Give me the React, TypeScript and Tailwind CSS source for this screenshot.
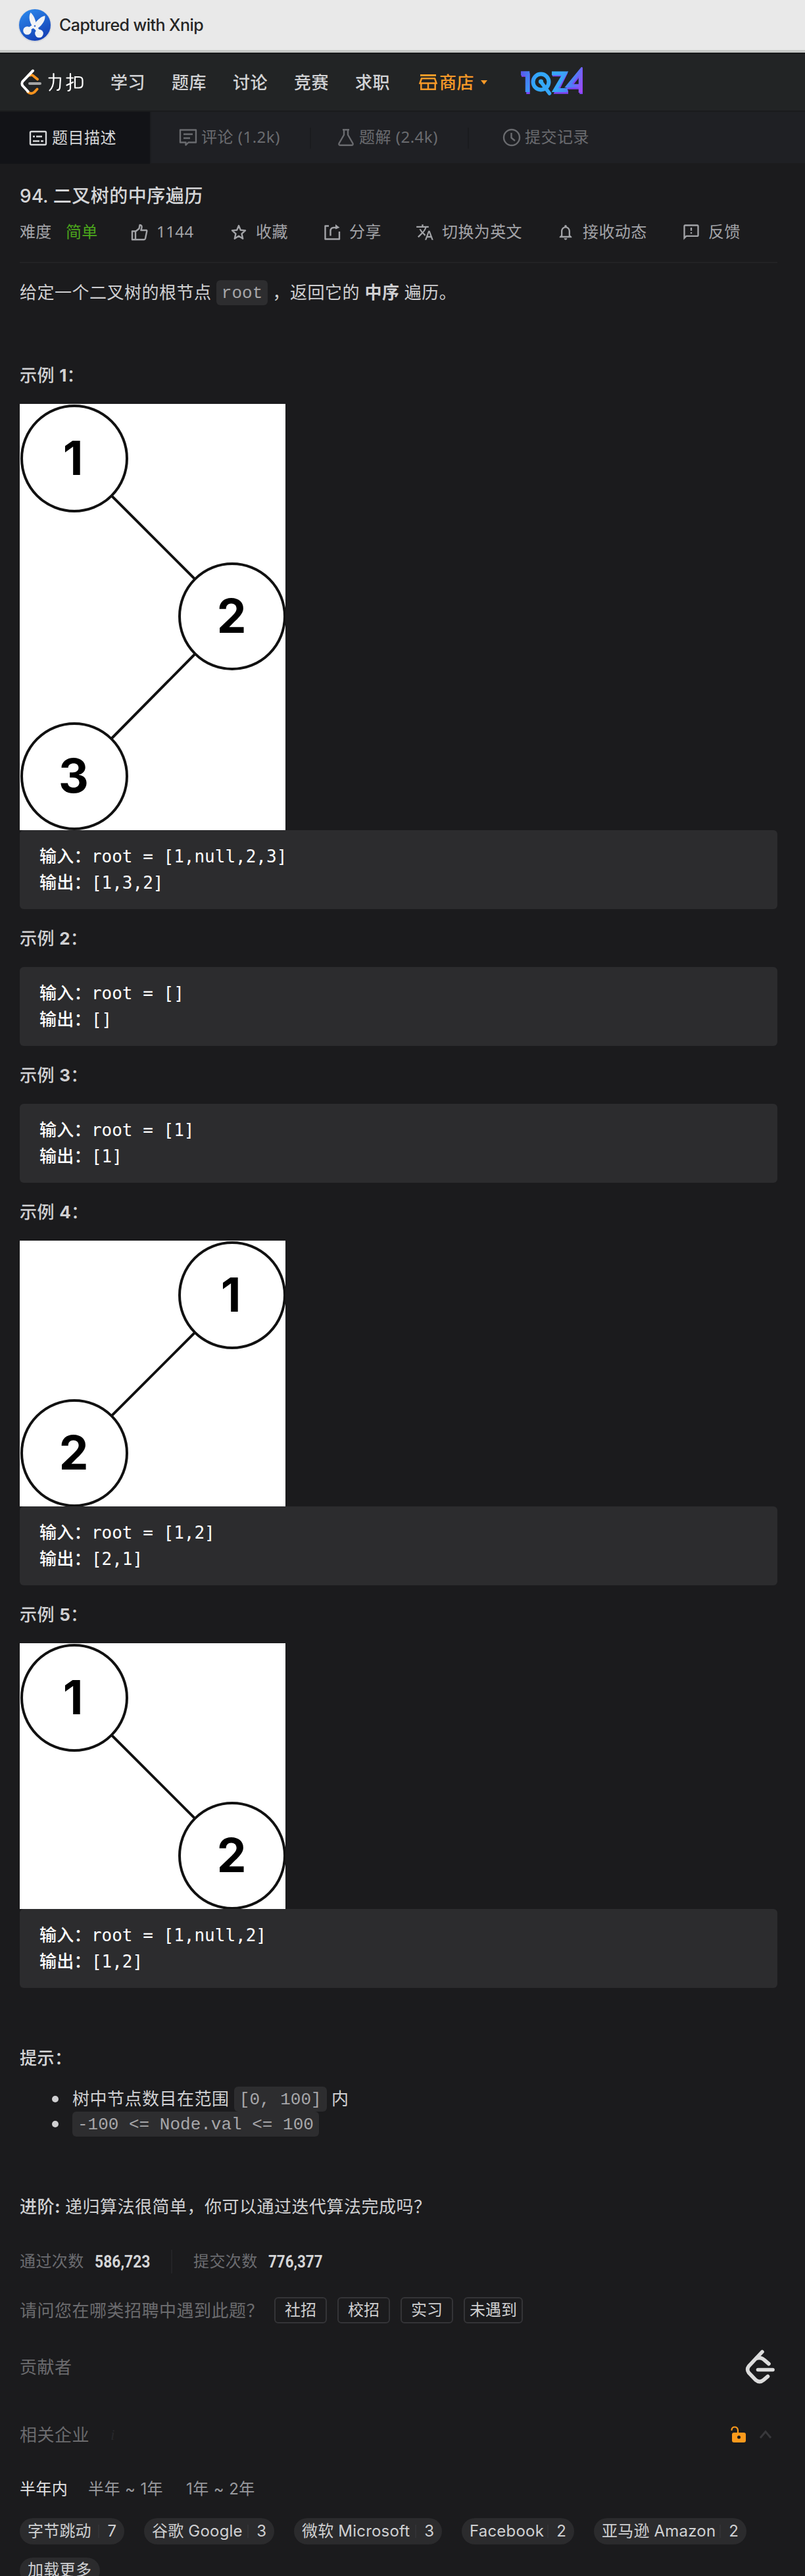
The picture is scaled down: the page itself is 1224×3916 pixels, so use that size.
import React from "react";

const SANS = "font-['Inter','Noto_Sans_CJK_SC',sans-serif]";

/* CJK runs carry a slight tracking; the base text size is 26px, the small one 24px. */
function Zh({ children, className = "" }: { children: React.ReactNode; className?: string }) {
  return <span className={`tracking-[0.5px] ${className}`}>{children}</span>;
}

function Chip({ children }: { children: string }) {
  return (
    <code className="inline-block h-[38px] rounded-[6px] bg-[#2d2d2f] px-2 align-top font-['Liberation_Mono',monospace] text-[26px] leading-[40px] whitespace-pre text-[#a6a6a9]">
      {children}
    </code>
  );
}

function XnipIcon() {
  return (
    <svg width="54" height="54" viewBox="0 0 54 54" className="ml-[26px] mt-[11px] shrink-0">
      <defs>
        <linearGradient id="xnip" x1="0" y1="0" x2="0.5" y2="1">
          <stop offset="0" stopColor="#2c8df0" />
          <stop offset="1" stopColor="#1644b8" />
        </linearGradient>
      </defs>
      <circle cx="27" cy="27.8" r="25.4" fill="#cfd2d8" opacity="0.7" />
      <circle cx="27" cy="27" r="24" fill="url(#xnip)" />
      <path d="M20.5 8 C16.5 15 19.5 23 23.5 30 L29 26 C28 19 25.5 12.5 20.5 8Z" fill="#f1f3f6" />
      <path d="M42.5 13 C37 14 32 18 27.5 24 L23 31 L28.5 34.5 C36 29 43 22 42.5 13Z" fill="#f1f3f6" />
      <circle cx="15.5" cy="35.5" r="6.3" fill="#f1f3f6" />
      <circle cx="33.5" cy="40" r="6.3" fill="#f1f3f6" />
      <path d="M19 32.5 L26 28 L32 36" stroke="#f1f3f6" strokeWidth="5" fill="none" />
      <circle cx="27" cy="28.5" r="1.2" fill="#2a62cc" />
    </svg>
  );
}

function LeetLogo() {
  return (
    <svg width="33" height="40" viewBox="0 0 33 40" fill="none" strokeLinecap="round" strokeLinejoin="round">
      <path d="M14.5 9.5 C17 8.6 19 9.3 20.5 11 L26 15.5" stroke="#f7931e" strokeWidth="4" />
      <path d="M11 34.5 C14 37.5 18 37.8 21 35.3 L25.5 30.5" stroke="#f7931e" strokeWidth="4" />
      <path d="M19 2.5 L3.6 18.6 C2 20.5 2 23.5 3.6 25.5 L11.5 34" stroke="#fff" strokeWidth="4" />
      <path d="M14 22 H30" stroke="#a5a5a5" strokeWidth="4" />
    </svg>
  );
}

function Wordmark() {
  return (
    <svg width="54" height="30" viewBox="0 0 54 30" className="ml-[9px]" fill="none" stroke="#fff" strokeWidth="2.2" strokeLinecap="round" strokeLinejoin="round">
      <path d="M1.5 8.5 H19 L18 23 Q17.5 27 14 27" />
      <path d="M8.5 2 V11 Q8.5 22 2.5 27.5" />
      <path d="M28.5 8.5 H38 M34 2 V24 Q34 28 30.5 28 M28.5 19.5 L38 15" />
      <path d="M41 6.8 V23.5 M41 7 H47 Q52.5 7 52.5 12 V18 Q52.5 23.5 47 23.5 H41" />
    </svg>
  );
}

function StoreIcon() {
  return (
    <svg width="28" height="24" viewBox="0 0 28 24" fill="none" stroke="#f89a28" strokeWidth="2.5">
      <path d="M2 1.5 H26" strokeWidth="3" />
      <path d="M4 6.3 H24 L26.5 13.5 H1.5 Z" />
      <path d="M3.3 14 V22.7 H24.7 V14 M14 14 V22" />
    </svg>
  );
}

function EventLogo() {
  return (
    <svg width="95" height="46" viewBox="0 0 95 46" fill="none" className="ml-[49px]">
      <defs>
        <linearGradient id="evt" gradientUnits="userSpaceOnUse" x1="0" y1="8" x2="96" y2="40">
          <stop offset="0" stopColor="#5b52e8" />
          <stop offset="0.25" stopColor="#31a8fb" />
          <stop offset="0.6" stopColor="#39a6f8" />
          <stop offset="0.8" stopColor="#4f7cf6" />
          <stop offset="1" stopColor="#b43cf8" />
        </linearGradient>
      </defs>
      <g transform="translate(1 2)" stroke="#7d45f2" strokeWidth="5.5">
        <path d="M1 10 H11 V39" />
        <path d="M48 9.5 H67 L54 36 H72" />
        <path d="M92 39 V5 L73 29 H94" />
      </g>
      <g stroke="url(#evt)" strokeWidth="6">
        <path d="M1 9.5 H11 V38" strokeWidth="6.5" />
        <circle cx="31.5" cy="22.5" r="12" />
        <path d="M31.5 22.5 L44.5 40" strokeWidth="5.5" strokeLinecap="round" />
        <path d="M48 9.5 H68 L53 35 H72" />
        <path d="M91.5 39 V6 L73 28.5 H94" strokeWidth="5.5" />
      </g>
      <circle cx="31.5" cy="22" r="3.6" fill="#33adfb" />
    </svg>
  );
}

const icon = { fill: "none", stroke: "currentColor", strokeWidth: 2.4, strokeLinejoin: "round" as const };

function DescIcon() {
  return (
    <svg width="28" height="24" viewBox="0 0 28 24" {...icon}>
      <rect x="2" y="2" width="24" height="20" rx="1.5" />
      <path d="M6 9.5 H9 M11 9.5 H20 M6 16.5 H16 M18 16.5 H22" />
    </svg>
  );
}
function CommentIcon() {
  return (
    <svg width="28" height="28" viewBox="0 0 28 28" {...icon}>
      <path d="M2 2.5 H26 V21.5 H14.5 L10.5 25.5 V21.5 H2 Z" />
      <path d="M7 9 H21 M7 15 H17" />
    </svg>
  );
}
function FlaskIcon() {
  return (
    <svg width="26" height="28" viewBox="0 0 26 28" {...icon}>
      <path d="M8 2.2 H18 M10 2.5 V10 L2.5 23 Q1.8 25.8 4.5 25.8 H21.5 Q24.2 25.8 23.5 23 L16 10 V2.5" />
    </svg>
  );
}
function ClockIcon() {
  return (
    <svg width="28" height="28" viewBox="0 0 28 28" {...icon}>
      <circle cx="14" cy="14" r="12" />
      <path d="M13.5 7 V14.5 L19 19" />
    </svg>
  );
}
function LikeIcon() {
  return (
    <svg width="26" height="26" viewBox="0 0 26 26" {...icon}>
      <path d="M2 11.5 H7 V24.2 H2 Z M7 12 L12.5 7.5 L13.6 2 Q17.2 2 16.4 6.4 L15.4 10 H23.5 Q24.6 10.4 24.2 11.8 L22 22.6 Q21.5 24.2 20 24.2 H7" />
    </svg>
  );
}
function StarIcon() {
  return (
    <svg width="24" height="24" viewBox="0 0 24 24" {...icon}>
      <path d="M12 2 L14.8 8.8 L22 9.4 L16.5 14.3 L18.2 21.8 L12 17.8 L5.8 21.8 L7.5 14.3 L2 9.4 L9.2 8.8 Z" />
    </svg>
  );
}
function ShareIcon() {
  return (
    <svg width="26" height="26" viewBox="0 0 26 26" {...icon}>
      <path d="M8 3.5 H2.5 V23.5 H24 V12 M10.5 18.5 V11.5 Q10.5 6 15.5 6 H21" />
      <path d="M18 1 L24.5 6 L18 8.5 Z" fill="currentColor" stroke="none" />
    </svg>
  );
}
function TranslateIcon() {
  return (
    <svg width="28" height="28" viewBox="0 0 24 24" fill="currentColor">
      <path d="m12.87 15.07-2.54-2.51.03-.03c1.74-1.94 2.98-4.17 3.71-6.53H17V4h-7V2H8v2H1v1.99h11.17C11.5 7.92 10.44 9.75 9 11.35 8.07 10.32 7.3 9.19 6.69 8h-2c.73 1.63 1.73 3.17 2.98 4.56l-5.09 5.02L4 19l5-5 3.11 3.11.76-2.04zM18.5 10h-2L12 22h2l1.12-3h4.75L21 22h2l-4.5-12zm-2.62 7 1.62-4.33L19.12 17h-3.24z" />
    </svg>
  );
}
function BellIcon() {
  return (
    <svg width="28" height="28" viewBox="0 0 24 24" fill="currentColor">
      <path d="M12 22c1.1 0 2-.9 2-2h-4c0 1.1.9 2 2 2zm6-6v-5c0-3.07-1.63-5.64-4.5-6.32V4c0-.83-.67-1.5-1.5-1.5s-1.5.67-1.5 1.5v.68C7.64 5.36 6 7.92 6 11v5l-2 2v1h16v-1l-2-2zm-2 1H8v-6c0-2.48 1.51-4.5 4-4.5s4 2.02 4 4.5v6z" />
    </svg>
  );
}
function FeedbackIcon() {
  return (
    <svg width="28" height="28" viewBox="0 0 24 24" fill="currentColor">
      <path d="M20 2H4c-1.1 0-1.99.9-1.99 2L2 22l4-4h14c1.1 0 2-.9 2-2V4c0-1.1-.9-2-2-2zm0 14H5.17L4 17.17V4h16v12zm-9-4h2v2h-2v-2zm0-6h2v4h-2V6z" />
    </svg>
  );
}

type TreeNode = { x: number; y: number; v: string };

/* Binary tree figure; node centres sit 83px from the left edge of the white sheet. */
function Tree({ height, nodes, edges }: { height: number; nodes: TreeNode[]; edges: [number, number][] }) {
  return (
    <svg width="404" height={height} viewBox={`0 0 404 ${height}`} className="block bg-white">
      {edges.map(([a, b]) => (
        <line key={`${a}${b}`} x1={nodes[a].x} y1={nodes[a].y} x2={nodes[b].x} y2={nodes[b].y} stroke="#111" strokeWidth="4" />
      ))}
      {nodes.map((n) => (
        <g key={n.v}>
          <circle cx={n.x} cy={n.y} r="80" fill="#fff" stroke="#111" strokeWidth="4" />
          <text x={n.v === "1" ? n.x - 2 : n.x - 1} y={n.y + 25} textAnchor="middle" className="font-['Inter',sans-serif] text-[71px] font-bold" fill="#000">
            {n.v}
          </text>
        </g>
      ))}
    </svg>
  );
}

function Label({ n }: { n: number }) {
  return (
    <p className="my-6 h-10 text-[26px] leading-[42px] text-[#d0d0d2]">
      <Zh className="font-medium">示例</Zh> <b className="font-bold">{n}</b>
      <span className="font-medium">：</span>
    </p>
  );
}

function Sample({ input, output }: { input: string; output: string }) {
  return (
    <pre className="h-[120px] rounded-[6px] bg-[#2c2c2e] px-[30px] py-5 font-['DejaVu_Sans_Mono','Noto_Sans_CJK_SC',monospace] text-[26px] leading-10 text-white">
      <span className="font-medium tracking-[0.3px]">输入：</span>
      {input}
      {"\n"}
      <span className="font-medium tracking-[0.3px]">输出：</span>
      {output}
    </pre>
  );
}

function Action({ icon: glyph, text, className }: { icon: React.ReactNode; text: string; className: string }) {
  return (
    <div className={`flex h-10 shrink-0 items-center ${className}`}>
      <span className="flex w-7 shrink-0 justify-center">{glyph}</span>
      <span className="ml-3 pb-[3px] font-['Noto_Sans','Noto_Sans_CJK_SC',sans-serif] whitespace-nowrap tracking-[0.4px]">{text}</span>
    </div>
  );
}

const companies: [string, string, string][] = [
  ["字节跳动", "7", "w-[159px]"],
  ["谷歌 Google", "3", "w-[198px]"],
  ["微软 Microsoft", "3", "w-[225px]"],
  ["Facebook", "2", "w-[171px]"],
  ["亚马逊 Amazon", "2", "w-[232px]"],
];

export default function App() {
  return (
    <div className={`h-[3916px] w-[1224px] overflow-hidden bg-[#1b1b1d] ${SANS}`}>
      <div className="flex h-20 border-b-4 border-[#c6c8c6] bg-[#e9e9e9]">
        <XnipIcon />
        <span className="ml-[10px] text-[25px] leading-[77px] font-medium tracking-[-0.55px] text-[#262626]">Captured with Xnip</span>
      </div>

      <header className="flex h-[90px] items-center border-t-2 border-b-2 border-t-[#17191a] border-b-[#1a1b1d] bg-[#222425] pl-[31px] text-[26px] font-medium text-[#d2d3d5]">
        <LeetLogo />
        <Wordmark />
        <nav className="ml-[41px] flex gap-10">
          {["学习", "题库", "讨论", "竞赛", "求职"].map((t) => (
            <span key={t} className="w-[53px] whitespace-nowrap tracking-[0.5px]">{t}</span>
          ))}
        </nav>
        <div className="ml-[44px] flex items-center text-[#f89a28]">
          <StoreIcon />
          <span className="ml-[3px] w-[53px] whitespace-nowrap tracking-[0.5px]">商店</span>
          <svg width="12" height="7" viewBox="0 0 12 7" className="ml-[9px]">
            <path d="M1 0 H11 L6 6.5 Z" fill="#f89a28" />
          </svg>
        </div>
        <EventLogo />
      </header>

      <div className="flex h-[78px] bg-[#1f2024] font-['Noto_Sans','Noto_Sans_CJK_SC',sans-serif] text-[24px] tracking-[0.5px] text-[#6a6b6f]">
        <div className="flex h-[79px] w-[230px] items-center border-r-2 border-[#1b1c1f] bg-[#121317] pl-11 text-[#d6d7d9]">
          <DescIcon />
          <span className="ml-[7px] pb-0.5">题目描述</span>
        </div>
        <div className="flex h-full w-[241px] items-center pl-[42px]">
          <CommentIcon />
          <span className="ml-[6px] pb-0.5 whitespace-nowrap">评论 (1.2k)</span>
        </div>
        <div className="mt-6 h-8 w-0.5 bg-[#1a1b1e]" />
        <div className="flex h-full w-[238px] items-center pl-10">
          <FlaskIcon />
          <span className="ml-[7px] pb-0.5 whitespace-nowrap">题解 (2.4k)</span>
        </div>
        <div className="mt-6 h-8 w-0.5 bg-[#1a1b1e]" />
        <div className="flex h-full items-center pl-[51px]">
          <ClockIcon />
          <span className="ml-[6px] pb-0.5">提交记录</span>
        </div>
      </div>

      <main className="pr-[42px] pl-[30px]">
        <h1 className="mt-[30px] h-10 text-[28px] leading-10 font-medium whitespace-nowrap text-[#d4d5d7]">
          94. <Zh>二叉树的中序遍历</Zh>
        </h1>

        <div className="mt-[15px] flex h-[67px] border-b-2 border-[#222224] text-[24px] leading-10 text-[#a3a4a8]">
          <span className="w-[70px] shrink-0 tracking-[0.3px]">难度</span>
          <span className="w-[98px] shrink-0 tracking-[0.3px] text-[#4ba61c]">简单</span>
          <Action className="w-[151px]" icon={<LikeIcon />} text="1144" />
          <Action className="w-[142px]" icon={<StarIcon />} text="收藏" />
          <Action className="w-[141px]" icon={<ShareIcon />} text="分享" />
          <Action className="w-[214px]" icon={<TranslateIcon />} text="切换为英文" />
          <Action className="w-[191px]" icon={<BellIcon />} text="接收动态" />
          <Action className="w-[100px]" icon={<FeedbackIcon />} text="反馈" />
        </div>

        <div className="mt-[26px] h-[38px] text-[26px] leading-[38px] whitespace-nowrap text-[#d0d0d2]">
          <Zh>给定一个二叉树的根节点</Zh> <Chip>root</Chip> <Zh>，返回它的</Zh> <Zh className="font-bold">中序</Zh> <Zh>遍历。</Zh>
        </div>

        <div className="pt-[62px]">
          <Label n={1} />
          <Tree
            height={648}
            nodes={[{ x: 83, y: 83, v: "1" }, { x: 323, y: 323, v: "2" }, { x: 83, y: 566, v: "3" }]}
            edges={[[0, 1], [1, 2]]}
          />
          <Sample input="root = [1,null,2,3]" output="[1,3,2]" />
          <Label n={2} />
          <Sample input="root = []" output="[]" />
          <Label n={3} />
          <Sample input="root = [1]" output="[1]" />
          <Label n={4} />
          <Tree height={404} nodes={[{ x: 323, y: 83, v: "1" }, { x: 83, y: 323, v: "2" }]} edges={[[0, 1]]} />
          <Sample input="root = [1,2]" output="[2,1]" />
          <Label n={5} />
          <Tree height={404} nodes={[{ x: 83, y: 83, v: "1" }, { x: 323, y: 323, v: "2" }]} edges={[[0, 1]]} />
          <Sample input="root = [1,null,2]" output="[1,2]" />
        </div>

        <p className="mt-[87px] h-10 text-[26px] leading-10 font-medium text-[#d4d5d7]">
          <Zh>提示：</Zh>
        </p>
        <ul className="mt-[23px] text-[26px] leading-[38px] text-[#d0d0d2]">
          <li className="flex h-[38px] items-center whitespace-pre">
            <i className="mr-[21px] ml-[49px] size-[10px] rounded-full bg-[#d0d0d2]" />
            <span>
              <Zh>树中节点数目在范围</Zh> <Chip>[0, 100]</Chip> <Zh>内</Zh>
            </span>
          </li>
          <li className="flex h-[38px] items-center">
            <i className="mr-[21px] ml-[49px] size-[10px] rounded-full bg-[#d0d0d2]" />
            <Chip>{"-100 <= Node.val <= 100"}</Chip>
          </li>
        </ul>

        <p className="mt-[87px] h-10 text-[26px] leading-10 text-[#d0d0d2]">
          <Zh className="font-medium">进阶</Zh>
          <b>:</b> <Zh>递归算法很简单，你可以通过迭代算法完成吗？</Zh>
        </p>

        <div className="mt-[43px] flex h-10 items-center text-[24px] text-[#6b6c70]">
          <span className="w-[114px] tracking-[0.4px]">通过次数</span>
          <span className="w-[82px] origin-left scale-x-[0.88] font-['Roboto',sans-serif] text-[26px] font-bold text-[#d4d5d7]">586,723</span>
          <span className="ml-[34px] h-9 w-0.5 bg-[#242427]" />
          <span className="ml-8 w-[114px] tracking-[0.4px]">提交次数</span>
          <span className="origin-left scale-x-[0.86] font-['Roboto',sans-serif] text-[26px] font-bold text-[#d4d5d7]">776,377</span>
        </div>

        <div className="mt-[34px] flex h-10 items-center gap-4 text-[26px] text-[#6b6b6e]">
          <span className="w-[371px] whitespace-nowrap">
            <Zh>请问您在哪类招聘中遇到此题？</Zh>
          </span>
          {["社招", "校招", "实习", "未遇到"].map((t) => (
            <button
              key={t}
              className={`h-10 rounded-[6px] border-2 border-[#343437] text-[24px] leading-[34px] whitespace-nowrap text-[#cfcfd1] ${t === "未遇到" ? "w-[90px]" : "w-20"}`}
            >
              {t}
            </button>
          ))}
        </div>

        <div className="mt-10 flex h-[52px] items-center justify-between pr-[3px] text-[26px] text-[#6b6b6e]">
          <Zh>贡献者</Zh>
          <svg width="46" height="52" viewBox="0 0 46 52" fill="none" stroke="#dcdcdc" strokeWidth="5.6" strokeLinecap="round" strokeLinejoin="round">
            <path d="M26 3.2 L5.5 25 Q1.8 30 5.5 35 L16 46 Q22 51 28 46 L34.5 40.5" />
            <path d="M17.5 13 Q24 11 29 15.5 L36 21.5" />
            <path d="M19.5 30.5 H42" />
          </svg>
        </div>

        <div className="mt-[57px] flex h-10 items-center text-[26px] text-[#6b6b6e]">
          <Zh>相关企业</Zh>
          <span className="ml-8 font-['Liberation_Serif',serif] text-[24px] italic text-[#27282b]">i</span>
          <svg width="26" height="26" viewBox="0 0 26 26" className="ml-auto">
            <rect x="3" y="10" width="21" height="15" rx="3" fill="#fc9a1c" />
            <path d="M2.5 6 Q2.8 1.5 7 1.5 Q11.5 1.5 12 6.5 V11" stroke="#fc9a1c" strokeWidth="2.2" fill="none" strokeLinecap="round" />
            <circle cx="13.5" cy="17" r="2.5" fill="#1b1b1d" />
          </svg>
          <svg width="20" height="14" viewBox="0 0 20 14" className="mr-[8px] ml-[18px]" fill="none" stroke="#38383b" strokeWidth="3">
            <path d="M2 12 L10 2.5 L18 12" />
          </svg>
        </div>

        <div className="mt-[43px] flex h-10 items-center text-[24px] tracking-[0.4px] whitespace-nowrap text-[#98999d]">
          <span className="w-[104px] text-[#e0e0e2]">半年内</span>
          <span className="w-[149px]">半年 ~ 1年</span>
          <span>1年 ~ 2年</span>
        </div>

        <div className="mt-6 flex gap-[30px]">
          {companies.map(([name, count, w]) => (
            <div key={name} className={`flex h-10 shrink-0 items-center rounded-full bg-[#2b2b2d] px-3 text-[24px] whitespace-nowrap text-[#cfd0d2] ${w}`}>
              <span className="tracking-[0.2px]">{name}</span>
              <span className="mr-3 ml-auto h-5 w-0.5 bg-[#323235]" />
              <span>{count}</span>
            </div>
          ))}
        </div>
        <div className="mt-5 h-10 w-[122px] rounded-full bg-[#2b2b2d] px-3 text-[24px] leading-[38px] tracking-[0.3px] whitespace-nowrap text-[#cfd0d2]">加载更多</div>
      </main>
    </div>
  );
}
